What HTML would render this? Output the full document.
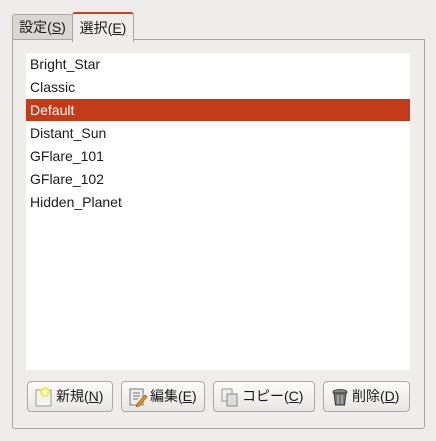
<!DOCTYPE html>
<html><head><meta charset="utf-8"><style>
body{margin:0;width:436px;height:441px;background:#edecea;font-family:"Liberation Sans","Noto Sans CJK JP",sans-serif;font-size:14px;color:#1a1a1a;position:relative;overflow:hidden}
.tab{position:absolute;border:1px solid #a6a6a2;border-bottom:none;border-radius:3px 3px 0 0;text-align:center;font-size:14px}
.panel{position:absolute;left:12px;top:39px;width:411px;height:388px;border:1px solid #a6a6a2;background:#eeedeb;border-radius:0 0 3px 3px}
.list{position:absolute;left:26px;top:53px;width:384px;height:317px;background:#fff}
.row{position:absolute;left:0;width:384px;height:22px;line-height:23px;padding-left:4px;box-sizing:border-box}
.btn{position:absolute;top:381px;height:31px;border:1px solid #a9a9a6;border-radius:4px;background:linear-gradient(#fbfbfa,#e7e6e3);box-sizing:border-box;font-size:14px;line-height:29px}
.btn svg{position:absolute;left:6px;top:5px}
.btn span{position:absolute;left:28px}
</style></head><body>
<div class="tab" style="left:12px;top:14px;width:59px;height:25px;background:#d8d7d3;line-height:25px">設定(<u>S</u>)</div>
<div class="panel"></div>
<div class="tab" style="left:72px;top:12px;width:60px;height:28px;background:#eeedeb;line-height:28px;border-top:2px solid #c9401f">選択(<u>E</u>)</div>
<div class="list">
<div class="row" style="top:0">Bright_Star</div>
<div class="row" style="top:23px">Classic</div>
<div class="row" style="top:46px;background:#c53a17;color:#fff">Default</div>
<div class="row" style="top:69px">Distant_Sun</div>
<div class="row" style="top:92px">GFlare_101</div>
<div class="row" style="top:115px">GFlare_102</div>
<div class="row" style="top:138px">Hidden_Planet</div>
</div>
<div class="btn" style="left:27px;width:86px"><svg width="20" height="20"><rect x="2" y="3" width="15" height="16" fill="#f3f3f0" stroke="#999"/><circle cx="11" cy="5" r="5" fill="#f5e94c"/><path d="M11 1.5l1 2.5 2.6.2-2 1.7.6 2.6-2.2-1.4-2.2 1.4.6-2.6-2-1.7 2.6-.2z" fill="#fff"/></svg><span>新規(<u>N</u>)</span></div>
<div class="btn" style="left:121px;width:84px"><svg width="20" height="20"><rect x="2" y="2" width="13" height="16" fill="#eee" stroke="#777"/><path d="M5 6h7M5 9h7M5 12h5" stroke="#777"/><path d="M9 17l8-9 2 2-8 9-3 1z" fill="#e8901a" stroke="#a05a10" stroke-width=".7"/></svg><span>編集(<u>E</u>)</span></div>
<div class="btn" style="left:213px;width:102px"><svg width="20" height="20"><rect x="2" y="2" width="10" height="12" fill="#eee" stroke="#999"/><rect x="7" y="7" width="10" height="12" fill="#ddd" stroke="#888"/></svg><span>コピー(<u>C</u>)</span></div>
<div class="btn" style="left:323px;width:87px"><svg width="20" height="20"><ellipse cx="10" cy="5" rx="7" ry="2.5" fill="#888" stroke="#444"/><path d="M4 6l1.5 12h9L16 6z" fill="#777" stroke="#333"/><path d="M8 8v9M12 8v9" stroke="#ccc"/></svg><span>削除(<u>D</u>)</span></div>
</body></html>
